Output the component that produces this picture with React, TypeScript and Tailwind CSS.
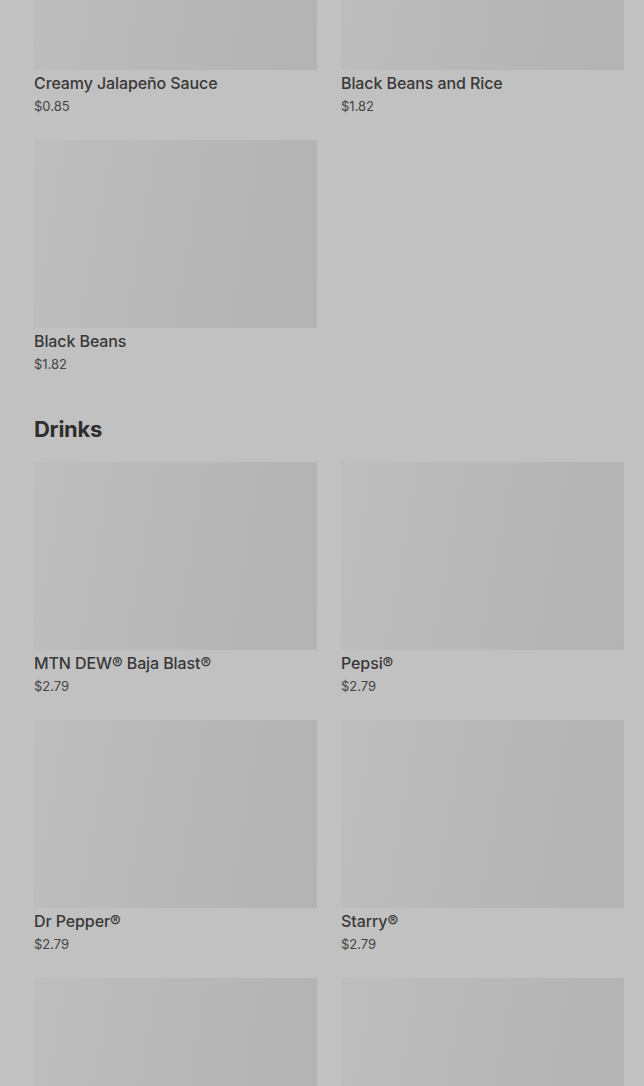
import React from "react";

type Item = { name?: string; price?: string };

const Card = ({ item }: { item: Item }) => (
  <div className="flex flex-col">
    <div className="h-[188px] w-full bg-[linear-gradient(100deg,#bebebe_0%,#b8b8b8_50%,#b3b3b3_100%)]" />
    {item.name && (
      <>
        <div className="mt-[3px] text-[16px] leading-5 font-medium text-[#383838] tracking-[-0.1px]">{item.name}</div>
        <div className="mt-[3px] text-[13px] leading-5 text-[#444444]">{item.price}</div>
      </>
    )}
  </div>
);

export default function App() {
  const top: Item[] = [
    { name: "Creamy Jalapeño Sauce", price: "$0.85" },
    { name: "Black Beans and Rice", price: "$1.82" },
    { name: "Black Beans", price: "$1.82" },
  ];
  const drinks: Item[] = [
    { name: "MTN DEW® Baja Blast®", price: "$2.79" },
    { name: "Pepsi®", price: "$2.79" },
    { name: "Dr Pepper®", price: "$2.79" },
    { name: "Starry®", price: "$2.79" },
    {},
    {},
  ];
  return (
    <div className="h-[1086px] overflow-hidden bg-[#c1c1c1] pl-[34px] pr-[20px] font-['Inter',sans-serif]">
      <div className="-mt-[118px] grid grid-cols-2 gap-x-6 gap-y-6">
        {top.map((it, i) => (
          <Card key={i} item={it} />
        ))}
      </div>
      <h2 className="mt-[41px] text-[22px] leading-7 font-bold text-[#2e2e2e] tracking-[-0.3px]">Drinks</h2>
      <div className="mt-[19px] grid grid-cols-2 gap-x-6 gap-y-6">
        {drinks.map((it, i) => (
          <Card key={i} item={it} />
        ))}
      </div>
    </div>
  );
}
